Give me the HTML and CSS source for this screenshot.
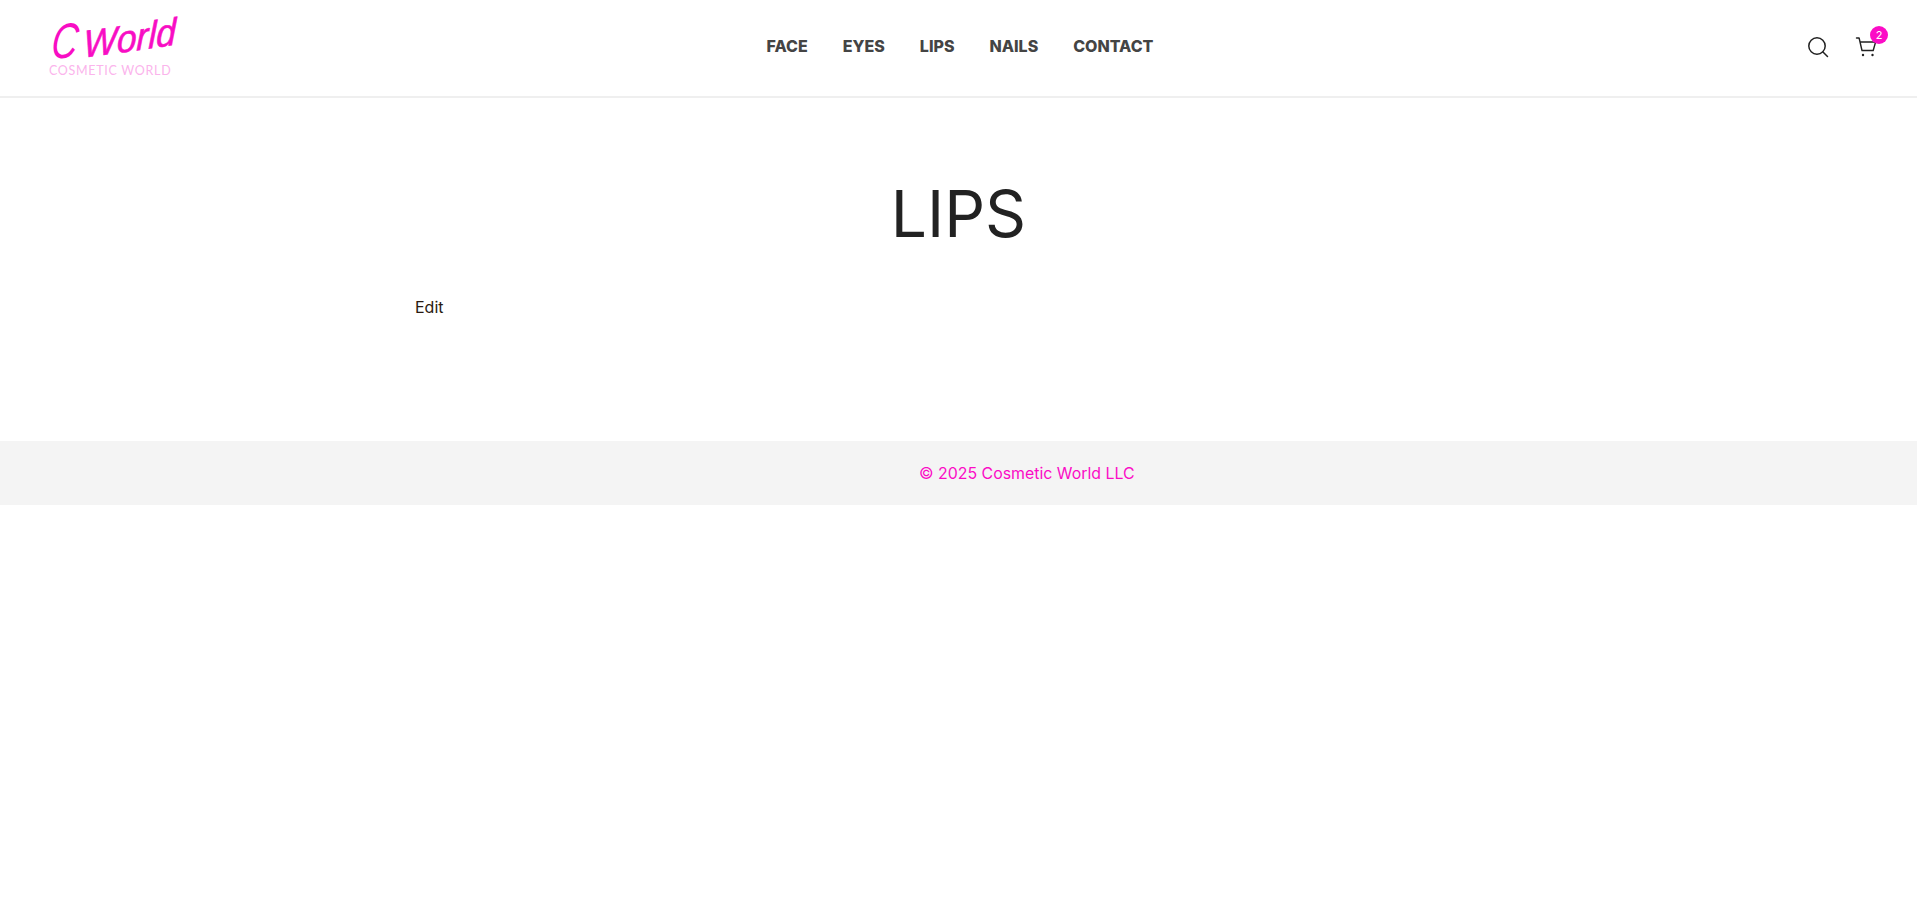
FILE: index.html
```html
<!DOCTYPE html>
<html lang="en">
<head>
<meta charset="utf-8">
<title>LIPS – Cosmetic World</title>
<link rel="stylesheet" href="styles.css">
</head>
<body>
<header class="site-header">
  <a class="logo" href="#">
    <span class="logo-script"><span class="logo-c">C</span><span class="logo-word">World</span></span>
    <span class="logo-sub">COSMETIC WORLD</span>
  </a>
  <nav class="main-nav">
    <a href="#">FACE</a>
    <a href="#">EYES</a>
    <a href="#">LIPS</a>
    <a href="#">NAILS</a>
    <a href="#">CONTACT</a>
  </nav>
  <div class="header-icons">
    <a class="icon-link" href="#" aria-label="Search">
      <svg class="icon" width="24" height="24" viewBox="0 0 24 24" fill="none" stroke="#222" stroke-width="1.5" stroke-linecap="round"><circle cx="11" cy="11" r="8.2"/><path d="M17 17l4.5 4.5"/></svg>
    </a>
    <a class="icon-link cart" href="#" aria-label="Cart">
      <svg class="icon" width="24" height="24" viewBox="0 0 24 24" fill="none" stroke="#222" stroke-width="1.4" stroke-linecap="round" stroke-linejoin="round"><path d="M1.5 3h2.6l2.9 12.5h11.2L20.6 7H5"/><circle cx="8" cy="20" r="1.2" fill="#222" stroke="none"/><circle cx="17.5" cy="20" r="1.2" fill="#222" stroke="none"/></svg>
      <span class="badge">2</span>
    </a>
  </div>
</header>
<main class="page">
  <h1 class="page-title">LIPS</h1>
  <a class="edit-link" href="#">Edit</a>
</main>
<footer class="site-footer">
  <p class="copyright">© 2025 Cosmetic World LLC</p>
</footer>
</body>
</html>
```

FILE: styles.css
```css
* { box-sizing: border-box; }
html, body { margin: 0; padding: 0; background: #fff; }
body { font-family: Inter, "Liberation Sans", sans-serif; font-size: 16px; color: #222; }
a { text-decoration: none; color: inherit; }

.site-header {
  height: 98px;
  border-bottom: 2px solid #efefef;
  display: grid;
  grid-template-columns: 1fr auto 1fr;
  align-items: center;
  padding: 0 38px 3px 41px;
}
.logo { display: flex; flex-direction: column; justify-self: start; width: 132px; margin-left: 8px; }
.logo-script {
  display: flex;
  align-items: baseline;
  gap: 9px;
  height: 48px;
  font-family: "Liberation Sans", sans-serif;
  font-style: italic;
  color: #f80dc4;
  white-space: nowrap;
}
.logo-c {
  font-size: 50px;
  line-height: 50px;
  display: inline-block;
  width: 25px;
  transform: scaleX(0.72) skewX(-10deg);
  transform-origin: left bottom;
}
.logo-word {
  font-size: 38px;
  line-height: 50px;
  font-weight: 400;
  -webkit-text-stroke: 0.6px #f80dc4;
  display: inline-block;
  letter-spacing: 0;
  transform: rotate(-8deg) scaleX(0.94) skewX(-10deg);
  transform-origin: left bottom;
}
.logo-sub {
  font-family: Lato, sans-serif;
  font-weight: 400;
  font-size: 12.5px;
  line-height: 14px;
  letter-spacing: 0.7px;
  color: #fbb4ec;
  white-space: nowrap;
}
.main-nav { display: flex; gap: 35px; margin-bottom: 2px; font-size: 16px; font-weight: 800; color: #444; }
.header-icons { display: flex; justify-self: end; align-items: center; gap: 25px; }
.icon-link { position: relative; display: flex; }
.badge {
  position: absolute;
  top: -9px;
  right: -9px;
  width: 18px;
  height: 18px;
  border-radius: 50%;
  background: #fb0cc6;
  color: #fff;
  font-size: 11px;
  line-height: 18px;
  text-align: center;
}

.page { width: 1087px; margin: 0 auto; height: 343px; padding-top: 77px; }
.page-title { margin: 0; text-align: center; font-size: 64px; font-weight: 400; line-height: 78px; color: #222; }
.edit-link { display: block; margin-top: 42px; line-height: 24px; color: #2a1a10; }

.site-footer { height: 64px; background: #f4f4f4; display: flex; align-items: center; padding-left: 919px; }
.copyright { margin: 1px 0 0; color: #fb0cc6; line-height: 24px; white-space: nowrap; font-size: 15.9px; }
```
